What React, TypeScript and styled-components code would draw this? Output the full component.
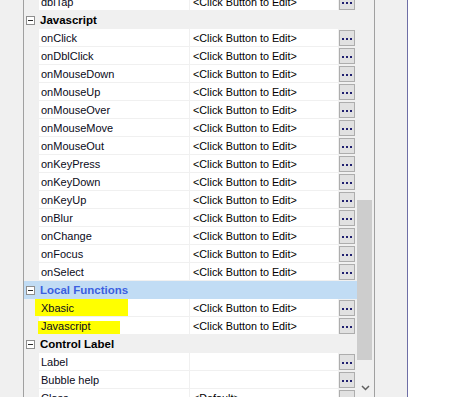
import React from "react";
import styled, {createGlobalStyle} from "styled-components";

const GlobalStyle = createGlobalStyle`
    html, body {
        margin: 0;
        padding: 0;
        background: #ffffff;
    }
    body {
        font-family: "Liberation Sans", Arial, sans-serif;
    }
`;

const Page = styled.div`
    display: flex;
    width: 452px;
    height: 397px;
    overflow: hidden;
    background: #ffffff;
`;

const Grid = styled.div`
    display: flex;
    width: 357px;
    height: 397px;
    overflow: hidden;
`;

const Gutter = styled.div`
    width: 23px;
    background: #f0f0f0;
    border-right: 1px solid #a0a0a0;
`;

const List = styled.div`
    flex: 1;
    display: flex;
    flex-direction: column;
    margin-top: -7px;
    background: #f0f0f0;
`;

interface HeaderProps {
    readonly selected?: boolean;
}

const Header = styled.div<HeaderProps>`
    display: flex;
    align-items: center;
    height: 18px;
    flex-shrink: 0;
    background: ${props => props.selected ? '#c1dcf4' : '#f0f0f0'};
`;

const Toggle = styled.div`
    box-sizing: border-box;
    width: 9px;
    height: 9px;
    margin: 0 5px 0 2px;
    border: 1px solid #8e8e8e;
    background: #ffffff;
    display: flex;
    align-items: center;
    justify-content: center;
    &::after {
        content: "";
        width: 5px;
        height: 1px;
        background: #2b2b2b;
    }
`;

const HeaderLabel = styled.span<HeaderProps>`
    font-size: 11.5px;
    font-weight: bold;
    line-height: 20px;
    color: ${props => props.selected ? '#3b5fe0' : '#000000'};
`;

const Row = styled.div`
    position: relative;
    display: flex;
    height: 18px;
    flex-shrink: 0;
`;

const Indent = styled.div`
    width: 15px;
`;

const NameCell = styled.div`
    width: 150px;
    height: 17px;
    margin-right: 1px;
    background: #ffffff;
    font-size: 11px;
    line-height: 19px;
    color: #0a0a20;
    padding-left: 2px;
    box-sizing: border-box;
`;

const NameText = styled.span`
    position: relative;
    z-index: 1;
`;

const ValueCell = styled.div`
    width: 148px;
    height: 17px;
    margin-right: 1px;
    background: #ffffff;
    font-size: 10.8px;
    line-height: 19px;
    color: #000000;
    padding-left: 3px;
    box-sizing: border-box;
    white-space: nowrap;
`;

const EditButton = styled.div`
    box-sizing: border-box;
    width: 16px;
    height: 16px;
    margin-top: 1px;
    border: 1px solid #adadad;
    background: #e1e1e1;
    display: flex;
    align-items: center;
    justify-content: center;
`;

interface MarkProps {
    readonly left: number;
    readonly top: number;
    readonly width: number;
    readonly height: number;
}

const Marker = styled.div<MarkProps>`
    position: absolute;
    left: ${props => props.left}px;
    top: ${props => props.top}px;
    width: ${props => props.width}px;
    height: ${props => props.height}px;
    background: #ffff00;
`;

const Scrollbar = styled.div`
    width: 17px;
    height: 397px;
    background: #f0f0f0;
    display: flex;
    flex-direction: column;
`;

const Thumb = styled.div`
    width: 15px;
    height: 160px;
    margin-top: 200px;
    background: #cdcdcd;
`;

const ArrowDown = styled.div`
    margin-top: auto;
    height: 12px;
    display: flex;
    justify-content: center;
`;

const Divider = styled.div`
    width: 1px;
    background: #a0a0a0;
`;

const SidePanel = styled.div`
    width: 32px;
    background: #f0f0f0;
    border-right: 1px solid #6e6ea6;
`;

const Blank = styled.div`
    flex: 1;
    background: #ffffff;
`;

function Dots() {
    return <svg width="14" height="14" viewBox="0 0 14 14">
        <rect x="2" y="7" width="2" height="2" fill="#202070"/>
        <rect x="6" y="7" width="2" height="2" fill="#202070"/>
        <rect x="10" y="7" width="2" height="2" fill="#202070"/>
    </svg>;
}

interface PropRowProps {
    name: string;
    value?: string;
    mark?: MarkProps;
}

function PropRow(props: PropRowProps) {
    return <Row>
        {props.mark && <Marker {...props.mark}/>}
        <Indent/>
        <NameCell><NameText>{props.name}</NameText></NameCell>
        <ValueCell>{props.value}</ValueCell>
        <EditButton><Dots/></EditButton>
    </Row>;
}

function GroupHeader(props: {title: string, selected?: boolean}) {
    return <Header selected={props.selected}>
        <Toggle/>
        <HeaderLabel selected={props.selected}>{props.title}</HeaderLabel>
    </Header>;
}

const EDIT = '<Click Button to Edit>';

const jsEvents = [
    'onClick', 'onDblClick', 'onMouseDown', 'onMouseUp', 'onMouseOver',
    'onMouseMove', 'onMouseOut', 'onKeyPress', 'onKeyDown', 'onKeyUp',
    'onBlur', 'onChange', 'onFocus', 'onSelect',
];

export default function App() {
    return <>
        <GlobalStyle/>
        <Page>
            <Grid>
                <Gutter/>
                <List>
                    <PropRow name="dblTap" value={EDIT}/>
                    <GroupHeader title="Javascript"/>
                    {jsEvents.map(e => <PropRow key={e} name={e} value={EDIT}/>)}
                    <GroupHeader title="Local Functions" selected/>
                    <PropRow name="Xbasic" value={EDIT}
                        mark={{left: 11, top: 0, width: 93, height: 17}}/>
                    <PropRow name="Javascript" value={EDIT}
                        mark={{left: 14, top: 4, width: 82, height: 13}}/>
                    <GroupHeader title="Control Label"/>
                    <PropRow name="Label"/>
                    <PropRow name="Bubble help"/>
                    <PropRow name="Class" value=" <Default>"/>
                </List>
            </Grid>
            <Scrollbar>
                <Thumb/>
                <ArrowDown>
                    <svg width="9" height="6" viewBox="0 0 9 6">
                        <path d="M1 1 L4.5 4.5 L8 1" stroke="#606060" strokeWidth="1.5" fill="none"/>
                    </svg>
                </ArrowDown>
            </Scrollbar>
            <Divider/>
            <SidePanel/>
            <Blank/>
        </Page>
    </>;
}
